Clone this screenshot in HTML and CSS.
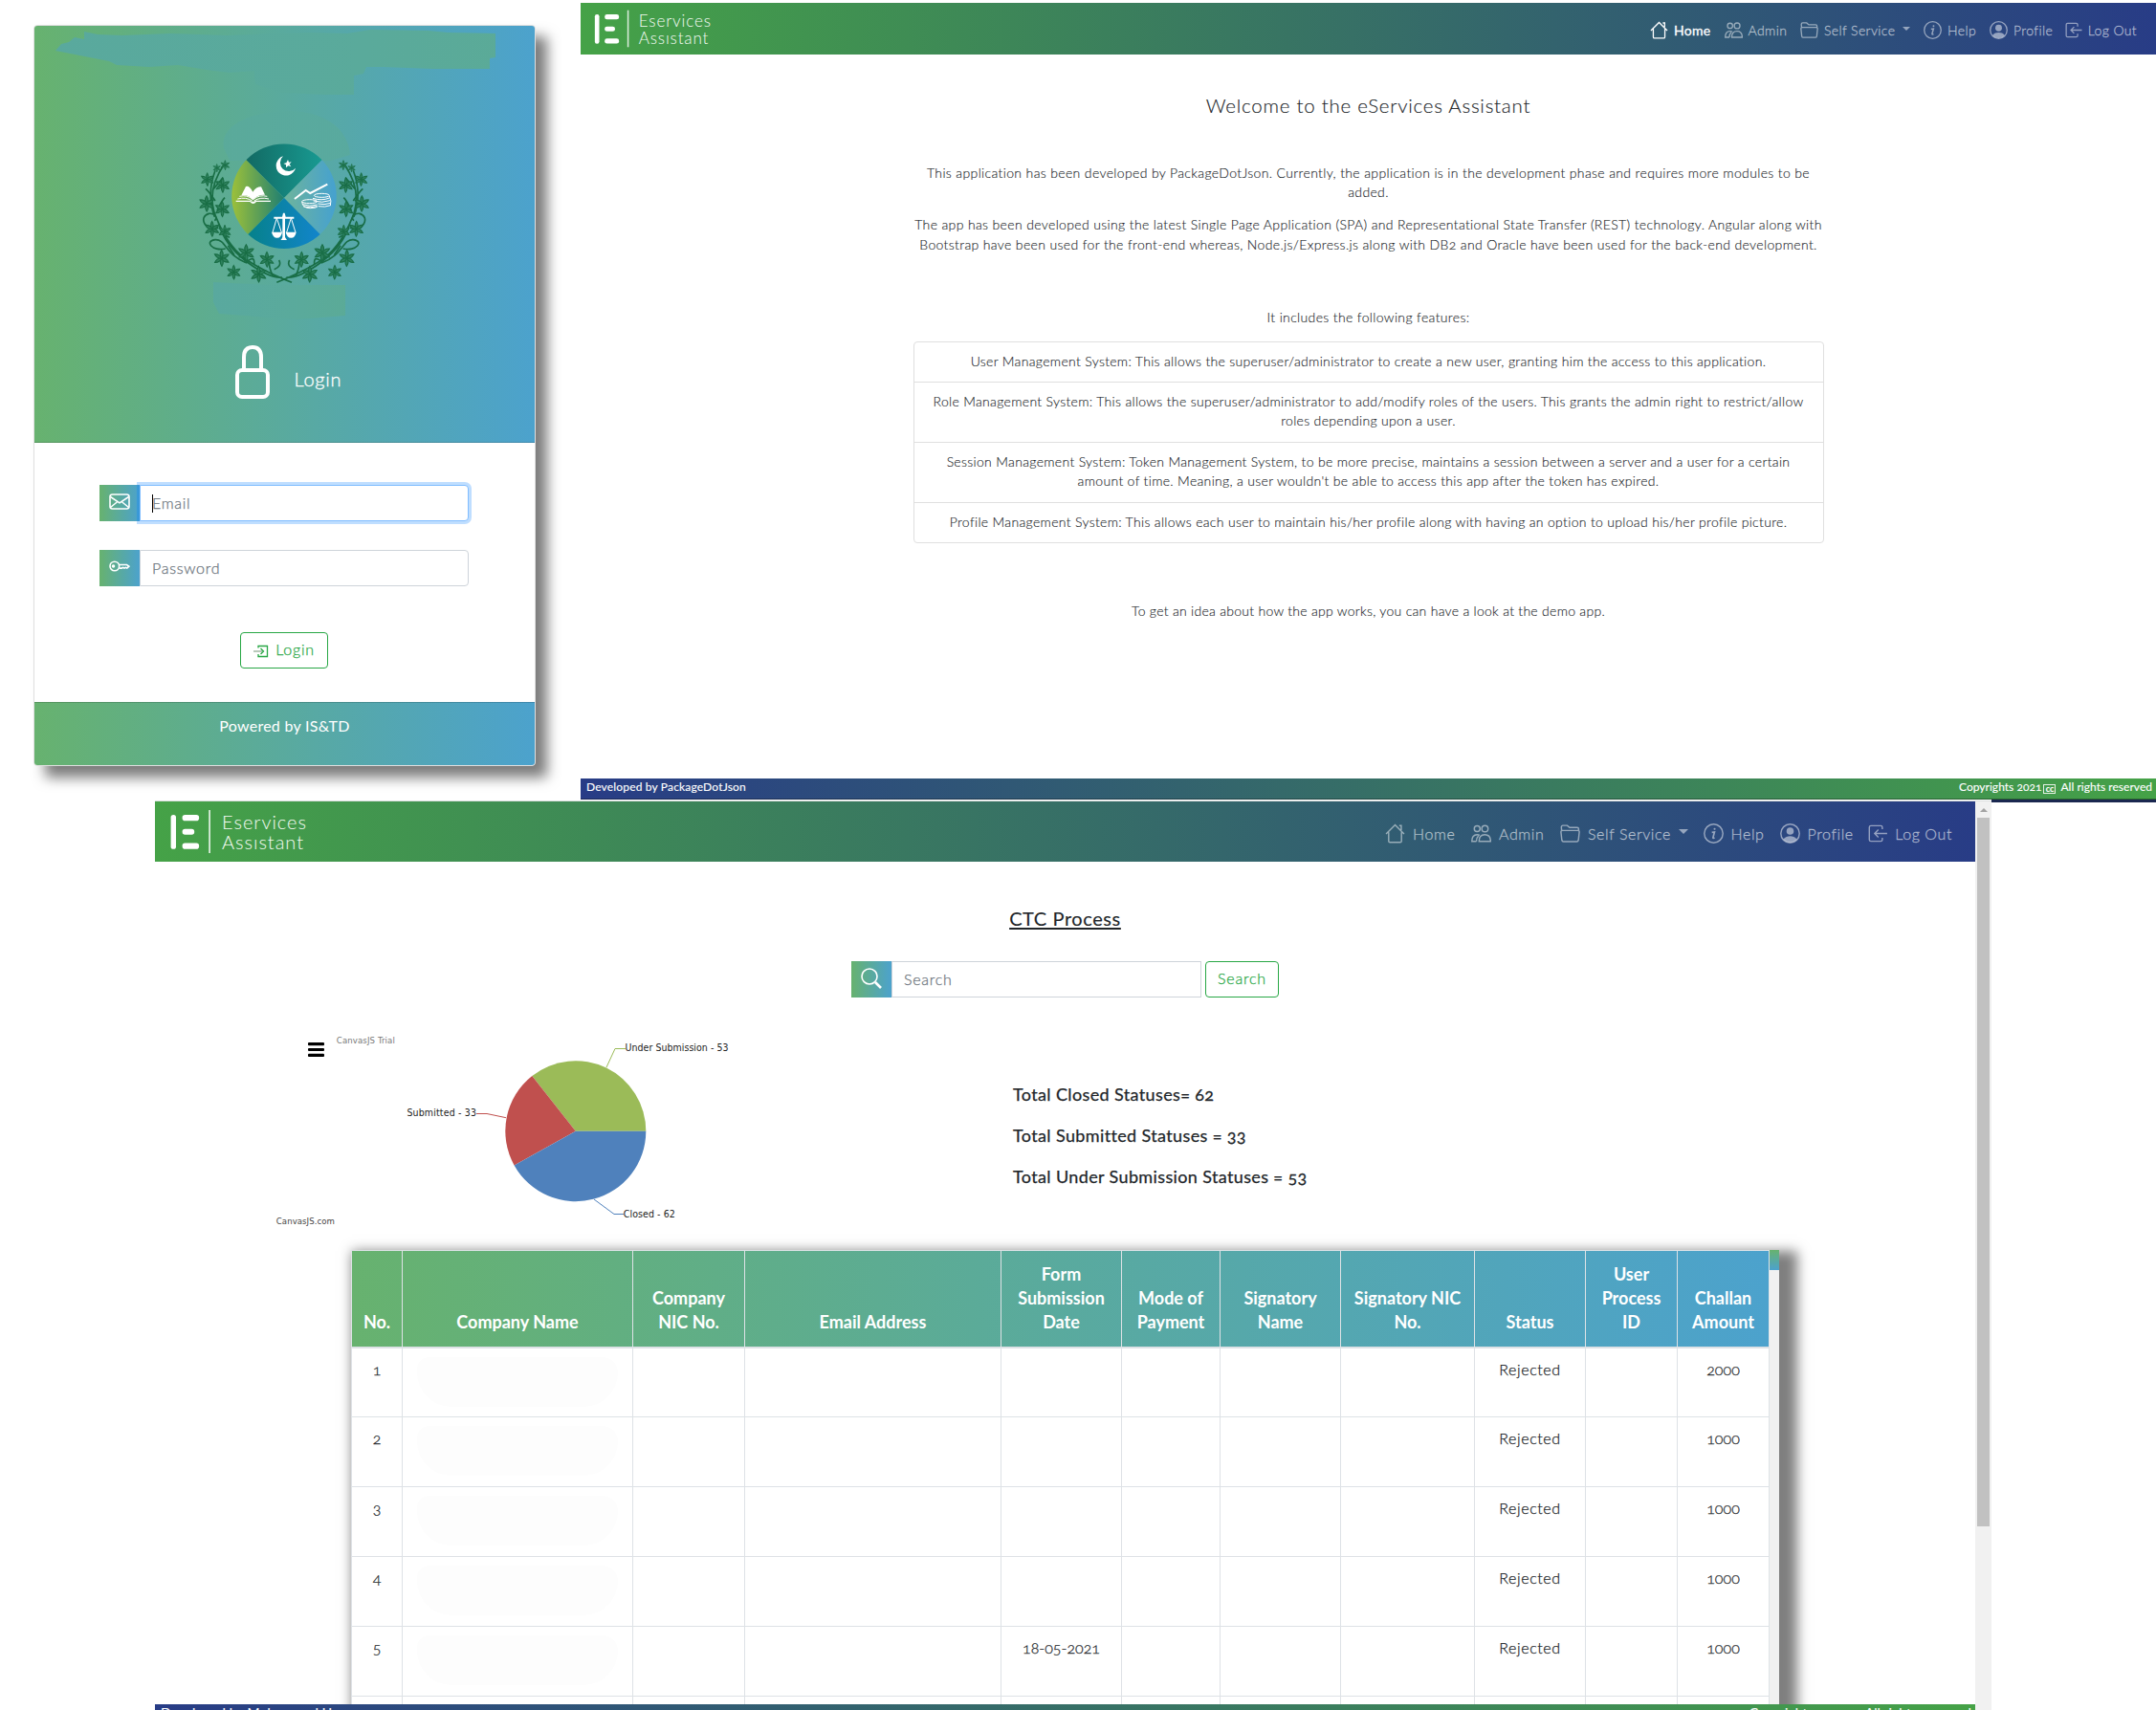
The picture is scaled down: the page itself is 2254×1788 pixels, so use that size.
FILE: index.html
```
<!DOCTYPE html>
<html lang="en">
<head>
<meta charset="utf-8">
<title>eServices Assistant</title>
<link rel="stylesheet" href="styles.css">
</head>
<body>
<svg class="defs" width="0" height="0" aria-hidden="true">
  <symbol id="i-house" viewBox="0 0 16 16"><path d="M.8 8.4 8 1.2l7.2 7.2M2.9 7v7q0 1 1 1h8.200q1 0 1-1V7M11.300 1.700h1.600v3.600" /></symbol>
  <symbol id="i-people" viewBox="0 0 16 16"><circle cx="4.800" cy="4.200" r="2.300"/><circle cx="11" cy="4.200" r="2.500"/><path d="M6.300 14.300c0-3.600 1.700-5.300 4.600-5.300s4.600 1.700 4.600 5.300zM4.200 14.300H.6c0-3.400 1.300-5.300 4.200-5.300.9 0 1.500.2 2 .5M4.200 14.300c0-2.300.6-3.500 1.600-4.400"/></symbol>
  <symbol id="i-folder" viewBox="0 0 16 16"><path d="M1.200 5.300 1 3q0-1.400 1.300-1.400h3.400L7.600 3.300h6q1.200 0 1.200 1.200v.8M2 5.600h12q1.400 0 1.300 1.300l-.7 6.400q-.2 1.200-1.300 1.200H2.700q-1.100 0-1.300-1.200L.7 6.900Q.6 5.600 2 5.600z"/></symbol>
  <symbol id="i-info" viewBox="0 0 16 16"><circle cx="8" cy="8" r="7.400"/><path d="M6.600 7.100 8.700 6.800 7.500 11.300q-.1.900 1.300.2" stroke-width="1.300"/><circle cx="8.800" cy="4.400" r=".8" fill="currentColor" stroke="none"/></symbol>
  <symbol id="i-person" viewBox="0 0 16 16"><circle cx="8" cy="8" r="7.400"/><circle cx="8" cy="6.100" r="2.900" fill="currentColor" stroke="none"/><path d="M2.600 12.600C4 10.500 6 10 8 10s4 .5 5.400 2.600A7 7 0 0 1 2.600 12.600z" fill="currentColor" stroke="none"/></symbol>
  <symbol id="i-logout" viewBox="0 0 16 16"><path d="M11.500 4.600V3q0-1.300-1.300-1.300H2.300Q1 1.700 1 3v10q0 1.300 1.300 1.300h7.900q1.300 0 1.300-1.300v-1.600M15.400 8H5.600M8.300 5 5.300 8l3 3"/></symbol>
  <symbol id="mark" viewBox="0 0 170 63">
    <g fill="#fff"><rect x="16.600" y="14" width="5.400" height="35.800" rx="2.600"/><rect x="28.600" y="14" width="17.500" height="6.200" rx="2.800"/><rect x="28.600" y="28.800" width="12.600" height="6" rx="2.800"/><rect x="28.600" y="43.500" width="17.500" height="6.200" rx="2.800"/><rect x="56.200" y="9" width="1.800" height="45" opacity=".8"/></g>
  </symbol>
  <symbol id="flower" viewBox="-30 -30 60 60" overflow="visible">
    <g fill="#2c7f5a" stroke="#14693f" stroke-width="3.500"><path d="M0 0Q-9-12 0-25 9-12 0 0z"/><path d="M0 0Q-9-12 0-25 9-12 0 0z" transform="rotate(62)"/><path d="M0 0Q-9-12 0-25 9-12 0 0z" transform="rotate(120)"/><path d="M0 0Q-9-12 0-25 9-12 0 0z" transform="rotate(178)"/><path d="M0 0Q-9-12 0-25 9-12 0 0z" transform="rotate(238)"/><path d="M0 0Q-9-12 0-25 9-12 0 0z" transform="rotate(300)"/></g>
  </symbol>
</svg>

<div class="top-row">
  <section class="login">
    <header class="login-head">
      <svg class="smudges" viewBox="36 27 523 436">
        <defs><linearGradient id="sm"><stop offset="0" stop-color="#58a8a2"/><stop offset=".6" stop-color="#5aaa9b"/><stop offset="1" stop-color="#5cab93"/></linearGradient></defs>
        <path fill="url(#sm)" opacity=".9" d="M58 53 64 46 72 44 78 39 88 41V33l14 3 26 1 50-2 60 2 85-3 40 1 24-4 61 1 20 2 50 1V60l-6 1V72l-60 0-52-2-17 0-3 7-10 2V99l-30 0-45-2-28-9-1-14-26 2-24-3-30-5-30 2-34-2-8-4z"/>
        <path fill="url(#sm)" opacity=".5" d="M234 155c-4-18 15-38 70-39 38 1 60 20 62 46l-20 6H240z"/>
        <path fill="url(#sm)" opacity=".8" d="M223 295l60 3 78 0v32l-50 4-82-6-6-12z"/>
      </svg>
      <svg class="emblem" viewBox="0 0 615 600">
        <defs>
          <linearGradient id="e1"><stop offset="0" stop-color="#126a63"/><stop offset="1" stop-color="#189a92"/></linearGradient>
          <linearGradient id="e2"><stop offset="0" stop-color="#9cc03a"/><stop offset="1" stop-color="#1f7f72"/></linearGradient>
          <linearGradient id="e3"><stop offset="0" stop-color="#6eb49c"/><stop offset="1" stop-color="#45a1d0"/></linearGradient>
          <linearGradient id="e4"><stop offset="0" stop-color="#06818a"/><stop offset="1" stop-color="#1285cc"/></linearGradient>
          <g id="branch" opacity=".92">
            <g fill="none" stroke="#14693f" stroke-width="5">
              <path d="M118 185Q60 270 92 350T170 470 330 556M90 205Q62 280 88 350M100 370Q120 440 190 492T300 540"/>
              <path d="M100 385C60 400 35 350 70 340 90 338 98 355 88 362M122 450C80 460 55 425 90 422 125 420 120 470 190 495"/>
              <path d="M96 330Q110 300 120 290M90 300Q70 270 60 262M190 490Q215 470 212 500M270 535Q255 500 262 490M275 515Q300 505 290 486M150 470l-20-30M85 262l30-35M105 400l30 15"/>
            </g>
            <use href="#flower" x="103" y="170" width="36" height="36"/><use href="#flower" x="80" y="182" width="30" height="30"/>
            <use href="#flower" x="40" y="208" width="50" height="50"/><use href="#flower" x="86" y="224" width="54" height="54"/>
            <use href="#flower" x="34" y="280" width="58" height="58"/><use href="#flower" x="84" y="298" width="56" height="56"/>
            <use href="#flower" x="52" y="360" width="56" height="56"/><use href="#flower" x="96" y="372" width="48" height="48"/>
            <use href="#flower" x="80" y="450" width="60" height="60"/><use href="#flower" x="156" y="432" width="62" height="62"/>
            <use href="#flower" x="224" y="456" width="56" height="56"/><use href="#flower" x="122" y="498" width="52" height="52"/>
            <use href="#flower" x="196" y="500" width="60" height="60"/>
          </g>
        </defs>
        <use href="#branch"/><use href="#branch" transform="matrix(-1 0 0 1 613 0)"/>
        <path fill="url(#e1)" d="M306 291 187 172A165 165 0 0 1 425 172z"/>
        <path fill="url(#e2)" d="M306 291 193 405A165 165 0 0 1 187 172z"/>
        <path fill="url(#e3)" d="M306 291 425 172A165 165 0 0 1 419 405z"/>
        <path fill="url(#e4)" d="M306 291 419 405A165 165 0 0 1 193 405z"/>
        <g fill="#fff">
          <path d="M303 160A31 31 0 1 0 342 197 27 27 0 1 1 303 160z"/>
          <path d="m318 171 3 8 8-1-6 7 5 8-9-3-7 6 0-9-8-4 9-2z"/>
          <path d="M208 272Q196 250 186 255L172 283Q198 280 208 298 220 280 246 281L234 256Q218 256 208 272z"/>
          <path d="M155 299H200Q208 306 216 299H264V303H219Q209 315 199 303H155z"/>
          <path d="M303 338h5l3 12h26v6h-28v58q4 6 6 9h-20q4-3 6-9v-58h-27v-6h26z"/>
          <path d="M267 398h33q-3 18-16 18t-17-18zM311 398h33q-3 18-16 18t-17-18z"/>
        </g>
        <g fill="none" stroke="#fff" stroke-width="3">
          <path d="M160 294Q186 287 206 300M166 286Q190 280 207 295M258 294Q232 287 212 300M253 286Q228 280 210 295" />
          <path d="M283 354 270 399M283 354 298 399M328 354 314 399M328 354 342 399"/>
          <path d="M339 294 374 267 388 276 442 248" stroke-width="6"/>
          <ellipse cx="424" cy="283" rx="24" ry="6"/><path d="M396 292q28 9 52-1M398 300q28 8 52-1M412 309q20 5 40-2M414 317q20 4 38-3M448 285q8 15 3 30"/>
          <ellipse cx="386" cy="302" rx="24" ry="6"/><path d="M362 303q2 20 26 20 20 0 24-6M364 311q22 9 46 1M367 318q20 6 42-1"/>
        </g>
      </svg>
      <div class="lock-row">
        <svg class="lock" viewBox="0 0 36 56" fill="none" stroke="#fff" stroke-width="4"><rect x="2" y="26" width="32" height="28" rx="5"/><path d="M9 26V12.500Q9 2 18 2t9 10.500V26"/></svg>
        <span>Login</span>
      </div>
    </header>
    <div class="login-body">
      <div class="field focused">
        <span class="addon"><svg viewBox="0 0 22 17"><rect x="1" y="1" width="20" height="15" rx="2.500"/><path d="M1.500 3.500 11 9.800l9.500-6.300M1.500 14.500 8.300 9M20.500 14.500 13.700 9"/></svg></span>
        <span class="input">Email</span>
      </div>
      <div class="field">
        <span class="addon"><svg viewBox="0 0 22 17"><circle cx="5.800" cy="8" r="4.800"/><path d="M10.300 6.500h8.200l2.300 1.700-2 1.900-1.400-.8-1.400.8-1.400-.8-1.400.8h-2.500"/><circle cx="4.500" cy="8" r="1" fill="#fff"/></svg></span>
        <span class="input">Password</span>
      </div>
      <button class="btn btn-login"><svg viewBox="0 0 16 14"><path d="M5 3.500V1.500h9.500v11H5V10" /><path d="M0 7h9" stroke="#b9c9bb" stroke-width="2"/><path d="M7.500 4 10.500 7l-3 3"/></svg>Login</button>
    </div>
    <footer class="login-foot">Powered by IS&amp;TD</footer>
  </section>

  <section class="home">
    <nav class="navbar nav-small">
      <svg class="brand" viewBox="0 0 170 63"><use href="#mark"/><text x="70" y="29.300" textLength="88">Eservices</text><text x="70" y="50.200" textLength="85">Assıstant</text></svg>
      <ul>
        <li class="active"><svg><use href="#i-house"/></svg>Home</li>
        <li><svg><use href="#i-people"/></svg>Admin</li>
        <li><svg><use href="#i-folder"/></svg>Self Service<i class="caret"></i></li>
        <li><svg><use href="#i-info"/></svg>Help</li>
        <li><svg><use href="#i-person"/></svg>Profile</li>
        <li><svg><use href="#i-logout"/></svg>Log Out</li>
      </ul>
    </nav>
    <main class="intro">
      <h1>Welcome to the eServices Assistant</h1>
      <p class="p1">This application has been developed by PackageDotJson. Currently, the application is in the development phase and requires more modules to be<br>added.</p>
      <p class="p2">The app has been developed using the latest Single Page Application (SPA) and Representational State Transfer (REST) technology. Angular along with<br>Bootstrap have been used for the front-end whereas, Node.js/Express.js along with DB2 and Oracle have been used for the back-end development.</p>
      <p class="p3">It includes the following features:</p>
      <ul class="features">
        <li>User Management System: This allows the superuser/administrator to create a new user, granting him the access to this application.</li>
        <li>Role Management System: This allows the superuser/administrator to add/modify roles of the users. This grants the admin right to restrict/allow<br>roles depending upon a user.</li>
        <li>Session Management System: Token Management System, to be more precise, maintains a session between a server and a user for a certain<br>amount of time. Meaning, a user wouldn't be able to access this app after the token has expired.</li>
        <li>Profile Management System: This allows each user to maintain his/her profile along with having an option to upload his/her profile picture.</li>
      </ul>
      <p class="p4">To get an idea about how the app works, you can have a look at the demo app.</p>
    </main>
    <footer class="site-foot"><span>Developed by PackageDotJson</span><span class="rights">Copyrights 2021<b class="cc">cc</b>All rights reserved</span></footer>
    <div class="edge"></div>
  </section>
</div>

<section class="process">
  <div class="page">
    <nav class="navbar nav-large">
      <svg class="brand" viewBox="0 0 170 63"><use href="#mark"/><text x="70" y="29.300" textLength="88">Eservices</text><text x="70" y="50.200" textLength="85">Assıstant</text></svg>
      <ul>
        <li><svg><use href="#i-house"/></svg>Home</li>
        <li><svg><use href="#i-people"/></svg>Admin</li>
        <li><svg><use href="#i-folder"/></svg>Self Service<i class="caret"></i></li>
        <li><svg><use href="#i-info"/></svg>Help</li>
        <li><svg><use href="#i-person"/></svg>Profile</li>
        <li><svg><use href="#i-logout"/></svg>Log Out</li>
      </ul>
    </nav>
    <h2>CTC Process</h2>
    <div class="search">
      <span class="addon"><svg viewBox="0 0 22 22"><circle cx="9" cy="9" r="8"/><path d="m15 15 6 6" stroke-width="2.600"/></svg></span>
      <span class="input">Search</span>
      <button class="btn">Search</button>
    </div>
    <div class="summary">
      <svg class="chart" viewBox="280 1080 500 205">
        <g fill="#000"><rect x="322" y="1090" width="17" height="3.200" rx="1"/><rect x="322" y="1095.900" width="17" height="3.200" rx="1"/><rect x="322" y="1101.800" width="17" height="3.200" rx="1"/></g>
        <path fill="#9bbb58" d="M601.800 1182.700 556.300 1125A73.500 73.500 0 0 1 675.300 1182.700z"/>
        <path fill="#c0504e" d="M601.800 1182.700 537.600 1218.500A73.500 73.500 0 0 1 556.300 1125z"/>
        <path fill="#4f81bc" d="M601.800 1182.700H675.300A73.500 73.500 0 0 1 537.600 1218.500z"/>
        <g fill="none" stroke-width="1"><path stroke="#9bbb58" d="m634 1116 9-19.500h11"/><path stroke="#c0504e" d="M498 1164.500h11l20 4.200"/><path stroke="#4f81bc" d="m621 1254 21 15.500h10"/></g>
        <g class="labels"><text x="653.500" y="1099" textLength="108">Under Submission - 53</text><text x="425.400" y="1167" textLength="72.500">Submitted - 33</text><text x="651.800" y="1273" textLength="54">Closed - 62</text></g>
        <text class="credit light" x="351.800" y="1091" textLength="61">CanvasJS Trial</text>
        <text class="credit" x="288.800" y="1280" textLength="61">CanvasJS.com</text>
      </svg>
      <div class="stats"><p>Total Closed Statuses= 62</p><p>Total Submitted Statuses = 33</p><p>Total Under Submission Statuses = 53</p></div>
    </div>
    <div class="table-box">
      <table>
        <colgroup><col class="c1"><col class="c2"><col class="c3"><col class="c4"><col class="c5"><col class="c6"><col class="c7"><col class="c8"><col class="c9"><col class="c10"><col class="c11"></colgroup>
        <thead><tr><th>No.</th><th>Company Name</th><th>Company<br>NIC No.</th><th>Email Address</th><th>Form<br>Submission<br>Date</th><th>Mode of<br>Payment</th><th>Signatory<br>Name</th><th>Signatory NIC<br>No.</th><th>Status</th><th>User<br>Process<br>ID</th><th>Challan<br>Amount</th></tr></thead>
        <tbody>
          <tr><td>1</td><td><div class="blank"></div></td><td></td><td></td><td></td><td></td><td></td><td></td><td class="status">Rejected</td><td></td><td>2000</td></tr>
          <tr><td>2</td><td><div class="blank"></div></td><td></td><td></td><td></td><td></td><td></td><td></td><td class="status">Rejected</td><td></td><td>1000</td></tr>
          <tr><td>3</td><td><div class="blank"></div></td><td></td><td></td><td></td><td></td><td></td><td></td><td class="status">Rejected</td><td></td><td>1000</td></tr>
          <tr><td>4</td><td><div class="blank"></div></td><td></td><td></td><td></td><td></td><td></td><td></td><td class="status">Rejected</td><td></td><td>1000</td></tr>
          <tr><td>5</td><td><div class="blank"></div></td><td></td><td></td><td>18-05-2021</td><td></td><td></td><td></td><td class="status">Rejected</td><td></td><td>1000</td></tr>
          <tr><td></td><td></td><td></td><td></td><td></td><td></td><td></td><td></td><td></td><td></td><td></td></tr>
        </tbody>
      </table>
      <div class="table-scroll"><i></i></div>
    </div>
    <footer class="site-foot pinned"><span>Developed by Muhammad U</span><span class="rights">Copyrights 2021<b class="cc">cc</b>All rights reserved</span></footer>
  </div>
  <div class="scrollbar"><i class="up"></i><i class="thumb"></i></div>
</section>
</body>
</html>
```
FILE: styles.css
```
* { box-sizing: border-box; }
body { margin: 0; width: 2254px; height: 1788px; overflow: hidden; background: #fff; color: #212529; font-family: Lato, "Open Sans", sans-serif; font-weight: 300; font-variant-numeric: oldstyle-nums; -webkit-text-stroke: .12px; }
ul { list-style: none; margin: 0; padding: 0; }
p, h1, h2 { margin: 0; font-weight: inherit; }
.defs { position: absolute; }
.top-row { display: flex; height: 838px; }

/* login card */
.login { display: flex; flex-direction: column; width: 525px; height: 775px; margin: 26px 0 0 35px; border: 1px solid #dfdfdf; border-radius: 4px; background: #fff; box-shadow: 12px 12px 14px rgba(0, 0, 0, .52); }
.login-head { position: relative; height: 436px; padding: 83px 0 0 159px; border-bottom: 1px solid rgba(0, 0, 0, .15); border-radius: 3px 3px 0 0; background: linear-gradient(to right, #67b26f, #4ca2cd); }
.smudges { position: absolute; left: 0; top: 0; width: 523px; height: 436px; }
.emblem { position: relative; display: block; width: 205px; height: 200px; }
.lock-row { position: relative; display: flex; gap: 26px; margin: 51px 0 0 50.500px; color: #fff; font-size: 20px; line-height: 30px; letter-spacing: .75px; -webkit-text-stroke: .3px; }
.lock { width: 36px; height: 56px; }
.lock-row span { padding-top: 20px; }
.login-body { flex: 1; padding: 44px 69px 0 68px; }
.field { display: flex; height: 38px; margin-bottom: 30px; }
.addon { display: flex; justify-content: center; width: 42px; background: linear-gradient(to right, #67b26f, #4ca2cd); }
.addon svg { width: 22px; height: 17px; margin-top: 9px; fill: none; stroke: #fff; stroke-width: 1.600; }
.input { flex: 1; padding-left: 12px; border: 1px solid #ced4da; border-radius: 0 4px 4px 0; background: #fff; color: #6c757d; font-size: 16px; line-height: 36px; letter-spacing: .72px; -webkit-text-stroke: .25px; }
.focused .input { position: relative; border-color: #80bdff; box-shadow: 0 0 0 3px rgba(0, 123, 255, .25); }
.focused .input::before { content: ""; position: absolute; left: 12px; top: 9px; width: 1px; height: 19px; background: #000; }
.btn { display: flex; justify-content: center; height: 38px; padding: 0; border: 1px solid #28a745; border-radius: 4px; background: #fff; color: #28a745; font: 300 16px/34px Lato, sans-serif; letter-spacing: .8px; -webkit-text-stroke: .25px; }
.btn-login { gap: 7px; width: 92px; margin: 48px auto 0; }
.btn-login svg { width: 16px; height: 14px; margin-top: 12px; fill: none; stroke: #28a745; stroke-width: 1.300; }
.login-foot { height: 66px; padding-top: 12px; border-top: 1px solid rgba(0, 0, 0, .15); border-radius: 0 0 3px 3px; background: linear-gradient(to right, #67b26f, #4ca2cd); color: #fff; font-size: 16px; line-height: 24px; font-weight: 400; letter-spacing: .27px; text-align: center; -webkit-text-stroke: 0; }

/* navigation bars */
.navbar { display: flex; justify-content: space-between; background: linear-gradient(to right, #45a247, #283c86); -webkit-text-stroke: .3px; }
.navbar ul { display: grid; color: rgba(255, 255, 255, .5); white-space: nowrap; }
.navbar li { display: flex; align-items: center; }
.navbar li svg { fill: none; stroke: currentColor; stroke-width: 1.100; }
.navbar .active { color: #fff; font-weight: 400; letter-spacing: .28px; }
.caret { border: solid transparent; border-top-color: currentColor; border-bottom-width: 0; }
.brand { fill: #f4fbf4; font: 300 20px Lato, sans-serif; }
.nav-small { height: 54px; margin-top: 3px; padding-right: 20px; }
.nav-small .brand { width: 147px; height: 54px; }
.nav-small ul { grid-template-columns: 77.500px 79.500px 129px 69px 78.500px 75.500px; font-size: 14px; letter-spacing: .39px; }
.nav-small li { padding-top: 2px; }
.nav-small li svg { width: 19px; height: 19px; margin-right: 6px; }
.nav-small .caret { margin: -3px 0 0 8px; border-width: 4px; border-bottom-width: 0; }
.nav-large { height: 63px; padding-right: 24px; }
.nav-large .brand { width: 170px; height: 63px; }
.nav-large ul { grid-template-columns: 90px 93px 149.500px 80px 92px 88.500px; font-size: 16px; letter-spacing: .61px; }
.nav-large li { padding-top: 3px; }
.nav-large li svg { width: 21px; height: 21px; margin-right: 8px; }
.nav-large .caret { margin: -3px 0 0 8px; border-width: 5px; border-bottom-width: 0; }

/* home page */
.home { position: relative; display: flex; flex-direction: column; width: 1647px; margin-left: 47px; }
.intro { width: 952px; margin: 0 auto; font-size: 14px; line-height: 20.600px; letter-spacing: .357px; text-align: center; white-space: nowrap; }
.intro h1 { margin-top: 38px; font-size: 20.500px; line-height: 30px; letter-spacing: .74px; }
.p1 { margin-top: 45.500px; }
.p2 { margin-top: 13.700px; }
.p3 { margin-top: 55.500px; }
.features { height: 211px; margin-top: 14px; border: 1px solid #dfdfdf; border-radius: 4px; }
.features li { height: 42px; padding-top: 10px; border-bottom: 1px solid #dfdfdf; letter-spacing: .322px; }
.features li:nth-child(2), .features li:nth-child(3) { height: 63px; }
.features li:last-child { border-bottom: 0; }
.p4 { margin-top: 61px; letter-spacing: .285px; }
.site-foot { display: flex; justify-content: space-between; height: 22px; margin: auto 0 2px; padding: 0 4px 0 6px; border-bottom: 1px solid rgba(0, 0, 0, .35); background: linear-gradient(to right, #283c86, #45a247); color: #fff; font-size: 12px; line-height: 17px; font-weight: 400; letter-spacing: .17px; }
.rights { letter-spacing: .03px; }
.cc { display: inline-block; width: 13px; height: 10px; margin: 0 5px 0 2px; border: 1px solid #e4f1e4; font-size: 9px; line-height: 7px; letter-spacing: 0; text-align: center; vertical-align: -1px; }
.edge { position: absolute; right: 0; bottom: -1px; width: 172px; height: 3px; background: #1a2750; }

/* process page */
.process { display: flex; width: 1920px; height: 950px; margin-left: 162px; box-shadow: 0 -1px 0 #dcdfdf; }
.page { position: relative; width: 1903px; overflow: hidden; background: #fff; }
.page h2 { margin-top: 44px; font-size: 20px; line-height: 30px; font-weight: 400; letter-spacing: .58px; text-align: center; text-decoration: underline; text-decoration-thickness: 2px; text-underline-offset: 2px; }
.search { display: flex; width: 447px; height: 38px; margin: 30px auto 0; }
.search .addon svg { width: 22px; height: 22px; margin-top: 7px; }
.search .input { border-radius: 0; }
.search .btn { width: 77px; margin-left: 4px; }
.summary { display: flex; margin-top: 37px; padding-left: 118px; }
.chart { width: 500px; height: 205px; -webkit-text-stroke: 0; }
.labels { fill: #222; font: 10.500px "DejaVu Sans Condensed", "Open Sans", sans-serif; }
.credit { fill: #444; font: 9.500px "DejaVu Sans Condensed", "Open Sans", sans-serif; }
.light { fill: #777; }
.stats { margin: 43px 0 0 279px; font-size: 18px; line-height: 43px; font-weight: 400; letter-spacing: .37px; -webkit-text-stroke: .25px; }
.table-box { display: flex; width: 1493px; margin: 22px auto 0; box-shadow: 10px 10px 12px 9px rgba(0, 0, 0, .5); }
table { table-layout: fixed; width: 1483px; border-collapse: collapse; background: #fff; }
.c1 { width: 53px; } .c2 { width: 241px; } .c3 { width: 117px; } .c4 { width: 268px; } .c5 { width: 126px; } .c6 { width: 103px; }
.c7 { width: 126px; } .c8 { width: 140px; } .c9 { width: 116px; } .c10 { width: 96px; } .c11 { width: 96px; }
thead { background: linear-gradient(to right, #67b26f, #4ca2cd); }
th, td { padding: 0; border: 1px solid #dee2e6; text-align: center; }
th { height: 101px; padding-bottom: 13px; border-bottom-width: 2px; color: #fff; font-size: 18px; line-height: 25px; vertical-align: bottom; -webkit-text-stroke: 0; }
td { height: 73px; padding-top: 9px; font-size: 16px; line-height: 26px; letter-spacing: 0; vertical-align: top; -webkit-text-stroke: .25px; }
.status { letter-spacing: .6px; }
.blank { width: 210px; height: 52px; margin: 0 auto; border-radius: 14px 18px 40px 40px; background: #fdfdfd; }
.table-scroll { width: 10px; background: #f1f1f1; }
.table-scroll i { display: block; height: 21px; background: linear-gradient(#67b26f, #4ca2cd); }
.pinned { position: absolute; left: 0; right: 0; bottom: -20px; height: 26px; margin: 0; font-size: 14px; line-height: 17px; }
.scrollbar { width: 17px; background: #f1f1f1; }
.up { display: block; width: 8px; margin: 7px 0 0 5px; border: solid transparent; border-width: 0 4px 4px; border-bottom-color: #a3a3a3; }
.thumb { display: block; width: 13px; height: 741px; margin: 6px 0 0 2px; background: #c1c1c1; }
```
